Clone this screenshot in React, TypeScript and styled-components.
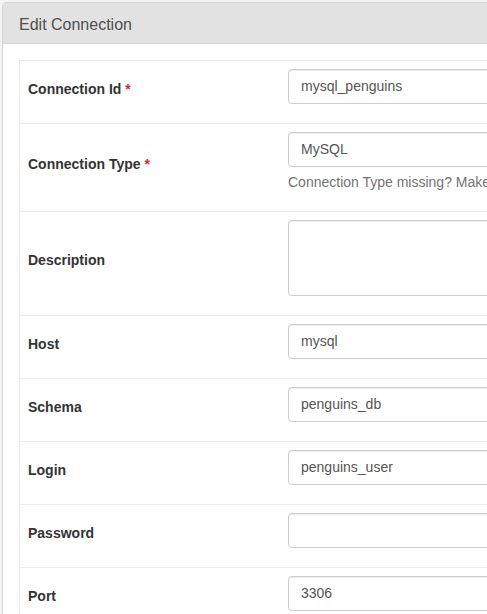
import React from 'react';
import styled, { createGlobalStyle } from 'styled-components';

const GlobalStyle = createGlobalStyle`
    html, body {
        margin: 0;
        padding: 0;
        background: #f4f4f4;
        overflow: hidden;
    }
    body {
        padding: 2px 0 0 2px;
        font-family: "Liberation Sans", Arial, sans-serif;
        font-size: 14px;
        color: #333;
    }
`

const Panel = styled.div`
    width: 1400px;
    background: #fff;
    border: 1px solid #d6d6d6;
    border-radius: 4px 0 0 0;
`

const PanelHeading = styled.div`
    padding: 12px 16px 8px;
    font-size: 16px;
    line-height: 20px;
    color: #4f4f4f;
    background: #e2e2e2;
    border-bottom: 1px solid #d6d6d6;
    border-radius: 3px 0 0 0;
`

const PanelBody = styled.div`
    padding: 16px;
`

const FormTable = styled.div`
    border: 1px solid #ebebeb;
`

const Row = styled.div`
    display: grid;
    grid-template-columns: 260px 1fr;
    & + & {
        border-top: 1px solid #ebebeb;
    }
`

const LabelCell = styled.div`
    display: flex;
    align-items: center;
    padding: 8px;
`

const Label = styled.label`
    display: inline-block;
    margin-bottom: 7px;
    font-weight: bold;
    line-height: 20px;
    color: #333;
`

const Required = styled.span`
    color: #e0242b;
    margin-left: 4px;
`

const FieldCell = styled.div`
    padding: 8px;
`

const Control = styled.div<{ $tall?: boolean }>`
    box-sizing: border-box;
    height: ${(p) => (p.$tall ? '76px' : '35px')};
    padding: 6px 12px;
    border: 1px solid #ccc;
    border-radius: 4px;
    box-shadow: inset 0 1px 1px rgba(0, 0, 0, 0.075);
    font-size: 14px;
    line-height: 21px;
    color: #555;
    background: #fff;
`

const HelpBlock = styled.div<{ $empty?: boolean }>`
    margin-top: ${(p) => (p.$empty ? '0' : '5px')};
    margin-bottom: 11px;
    line-height: 20px;
    color: #737373;
    white-space: nowrap;
`

interface Field {
    label: string
    value?: string
    required?: boolean
    tall?: boolean
    help?: string
}

const fields: Field[] = [
    { label: 'Connection Id', value: 'mysql_penguins', required: true },
    {
        label: 'Connection Type',
        value: 'MySQL',
        required: true,
        help: "Connection Type missing? Make sure you've installed the corresponding Airflow Provider Package.",
    },
    { label: 'Description', tall: true },
    { label: 'Host', value: 'mysql' },
    { label: 'Schema', value: 'penguins_db' },
    { label: 'Login', value: 'penguins_user' },
    { label: 'Password' },
    { label: 'Port', value: '3306' },
]

const App: React.FC = () => {
    return (
        <>
            <GlobalStyle />
            <Panel>
                <PanelHeading>Edit Connection</PanelHeading>
                <PanelBody>
                    <FormTable>
                        {fields.map((f) => (
                            <Row key={f.label}>
                                <LabelCell>
                                    <Label>
                                        {f.label}
                                        {f.required && <Required>*</Required>}
                                    </Label>
                                </LabelCell>
                                <FieldCell>
                                    <Control $tall={f.tall}>{f.value}</Control>
                                    <HelpBlock $empty={!f.help}>{f.help}</HelpBlock>
                                </FieldCell>
                            </Row>
                        ))}
                    </FormTable>
                </PanelBody>
            </Panel>
        </>
    )
}

export default App;
